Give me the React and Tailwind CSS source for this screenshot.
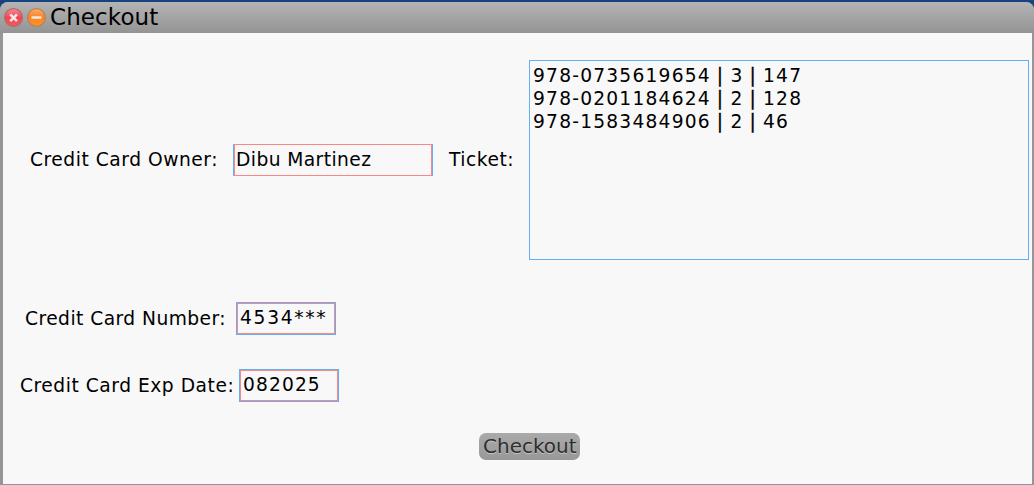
const orders = [
  ["978-0735619654", "3", "147"],
  ["978-0201184624", "2", "128"],
  ["978-1583484906", "2", "46"],
];

function Line({ children, className = "" }) {
  return <div className={`whitespace-pre ${className}`}>{children}</div>;
}

function Bar() {
  return <span className="[-webkit-text-stroke:0.3px_#000]">{" | "}</span>;
}

function WindowButton({ kind }) {
  const close = kind === "close";
  return (
    <svg width="19" height="19" viewBox="0 0 19 19" className="shrink-0">
      <defs>
        <linearGradient id={kind} x1="0" y1="0" x2="0" y2="1">
          <stop offset="0" stopColor={close ? "#f98c90" : "#f9ae70"} />
          <stop offset="0.5" stopColor={close ? "#f24652" : "#f98224"} />
          <stop offset="1" stopColor={close ? "#fb5560" : "#ff942e"} />
        </linearGradient>
      </defs>
      <circle cx="9.5" cy="9.5" r="8.9" fill={`url(#${kind})`} stroke={close ? "#b5686b" : "#b78355"} strokeWidth="1.2" />
      {close ? (
        <path d="M6.2 6.4l6.8 6.8M13 6.4l-6.8 6.8" stroke="#f3e6e7" strokeWidth="2.6" />
      ) : (
        <path d="M4.5 9.5h10" stroke="#f5e9dd" strokeWidth="2.6" />
      )}
    </svg>
  );
}

export default function App() {
  return (
    <div className="h-[485px] w-[1034px] overflow-hidden bg-[#19437f] pt-[2px] font-['DejaVu_Sans',sans-serif] text-[18.67px] leading-[23px] text-black">
      <div className="flex h-[483px] flex-col overflow-hidden rounded-t-[8px] bg-[#969696]">
        <header className="flex h-[31px] shrink-0 items-start bg-linear-to-b from-[#b4b4b4] to-[#949494] pl-[4px]">
          <div className="flex gap-[4px] pt-[6px]">
            <WindowButton kind="close" />
            <WindowButton kind="minimize" />
          </div>
          <Line className="ml-[4px] pt-[1px] text-[23px] leading-[28px] tracking-[0.1px]">Checkout</Line>
        </header>
        <main className="mr-[2px] mb-px ml-[3px] flex grow flex-col bg-[#f8f8f8]">
          <div className="flex h-[227px] items-start pt-[27px]">
            <Line className="ml-[27px] w-[203px] pt-[88px] tracking-[0.53px]">Credit Card Owner:</Line>
            <div className="mt-[84px] h-[32px] w-[200px] border-x border-[#62aff5]">
              <div className="h-full border border-[#fb8787] pt-[3px] pl-px tracking-[0.42px]">Dibu Martinez</div>
            </div>
            <Line className="ml-[16px] w-[80px] pt-[88px] tracking-[0.5px]">Ticket:</Line>
            <div className="h-[200px] w-[500px] border border-[#62aff5] pt-[3px] pl-[3px] tracking-[1.2px] [word-spacing:-1.1px]">
              {orders.map(([isbn, quantity, price]) => (
                <Line key={isbn}>
                  {isbn}
                  <Bar />
                  {quantity}
                  <Bar />
                  {price}
                </Line>
              ))}
            </div>
          </div>
          <div className="mt-[42px] flex h-[33px]">
            <Line className="ml-[22px] w-[211px] pt-[5px] tracking-[0.45px]">Credit Card Number:</Line>
            <div className="w-[100px] border border-[#62aff5]">
              <div className="h-full border border-[#fb8787] pt-[2px] pl-[2px] tracking-[1.7px]">4534***</div>
            </div>
          </div>
          <div className="mt-[34px] flex h-[33px]">
            <Line className="ml-[17px] w-[219px] pt-[5px] tracking-[0.53px]">Credit Card Exp Date:</Line>
            <div className="w-[100px] border border-[#62aff5]">
              <div className="h-full border border-[#fb8787] pt-[2px] pl-[2px] tracking-[1.1px]">082025</div>
            </div>
          </div>
          <button className="mt-[31px] ml-[476px] h-[27px] w-[101px] rounded-[7px] bg-linear-to-b from-[#aaaaaa] to-[#989898] pl-[4px] text-left text-[20px] text-[#2e2e2e] [text-shadow:0_1px_0_#c4c4c4]">Checkout</button>
        </main>
      </div>
    </div>
  );
}
